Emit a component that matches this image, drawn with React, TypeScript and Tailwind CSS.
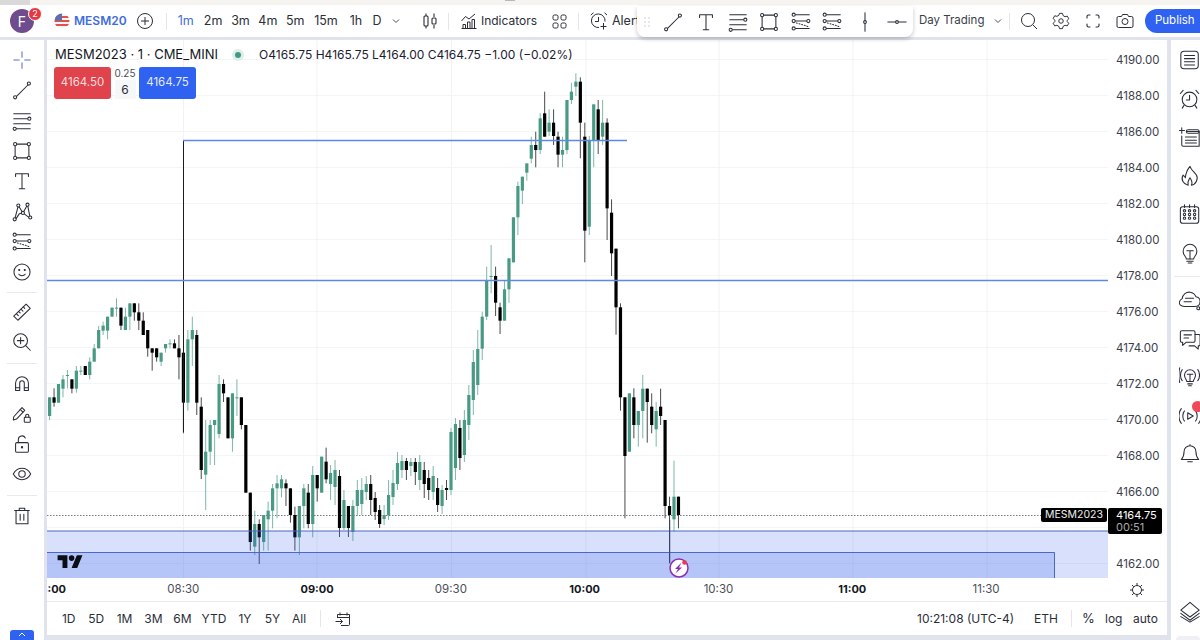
import React from "react";

type C = [number, string, number, number, number, number];

const z10: C[] = [
  [-30,"g",352,408,352,420],[-29,"b",352,368,325,380],[-28,"g",312,368,312,368],[-27,"g",298,326,285,352],[-26,"g",285,287,270,325],
  [-25,"b",298,326,298,340],[-24,"g",272,326,258,338],[-23,"g",272,274,258,285],[-22,"b",258,285,258,285],[-21,"g",245,285,232,298],
  [-20,"g",205,245,192,245],[-19,"g",150,205,138,205],[-18,"g",137,152,125,165],[-17,"g",110,152,110,178],[-16,"g",83,110,83,110],
  [-15,"g",83,85,55,110],[-14,"b",83,137,83,150],[-13,"g",110,150,83,150],[-12,"g",70,110,70,150],[-11,"b",70,97,70,122],
  [-10,"b",97,122,70,150],[-9,"b",122,165,97,165],[-8,"b",150,205,150,230],[-7,"b",205,218,205,272],[-6,"b",205,232,205,245],
  [-5,"g",218,245,218,258],[-4,"g",192,205,192,218],[-3,"g",190,192,178,205],[-2,"b",190,205,178,205],[-1,"b",205,232,165,298],
  [0,"b",218,368,218,460],[1,"g",178,368,150,392],[2,"g",150,178,110,258],[3,"b",165,368,150,405],[4,"b",380,570,352,597],
  [5,"g",515,584,420,690],[6,"g",435,515,420,555],[7,"g",420,435,420,555],[8,"g",312,462,285,475],[9,"b",312,340,298,366],
  [10,"b",352,475,352,475],[11,"g",340,475,340,515],[12,"g",352,354,298,408],[13,"b",352,435,352,448],[14,"b",435,638,435,638],
  [15,"b",638,786,638,812],[16,"g",732,800,692,825],[17,"b",732,772,718,852],[18,"g",705,786,705,812],[19,"g",692,718,665,812],
  [20,"g",625,692,612,745],[21,"g",610,625,585,715],[22,"g",598,625,585,652],[23,"b",610,625,598,678],[24,"b",625,705,625,728],
  [25,"b",705,772,680,812],[26,"g",678,772,678,825],[27,"g",625,678,612,745],[28,"b",638,732,612,745],[29,"g",585,732,558,772],
  [30,"b",585,625,585,665],[31,"g",530,638,530,638],[32,"b",545,598,503,610],
];
const real: C[] = [
  [33,"g",473,484,465,500],[34,"g",470,487,460,505],[35,"b",476,528,470,537],[36,"g",500,528,490,530],[37,"b",506,528,506,537],
  [38,"g",506,532,500,541],[39,"g",490,506,480,516],[40,"g",490,504,478,515],[41,"g",484,492,476,500],[42,"b",484,500,475,515],
  [43,"b",498,512,492,520],[44,"b",510,524,505,528],[45,"g",515,519,505,525],[46,"g",495,515,480,520],[47,"g",483,497,470,505],
  [48,"g",463,484,452,490],[49,"g",461,470,455,478],[50,"b",461,470,458,480],[51,"g",462,466,458,476],[52,"b",462,472,458,485],
  [53,"g",462,480,455,490],[54,"b",470,484,462,498],[55,"b",478,490,470,500],[56,"g",476,492,466,500],[57,"b",488,505,478,512],
  [58,"g",490,506,485,514],[59,"b",488,490,480,500],[60,"g",432,490,428,495],[61,"g",424,468,418,480],[62,"b",428,458,420,470],
  [63,"g",420,455,410,462],[64,"g",395,425,385,440],[65,"g",362,400,350,415],[66,"g",349,385,330,395],
];
const z11: C[] = [
  [67,"g",770,866,755,900],[68,"g",660,770,620,780],[69,"g",648,650,555,700],[70,"b",648,728,620,768],[71,"b",742,782,728,822],
  [72,"g",688,782,660,782],[73,"g",595,688,595,728],[74,"g",472,607,472,607],[75,"g",378,472,365,525],[76,"g",350,392,350,432],
  [77,"g",310,338,325,362],[78,"g",255,296,230,310],[79,"b",255,270,215,322],[80,"g",175,270,160,282],[81,"b",160,230,95,230],
  [82,"g",188,215,148,228],[83,"b",188,228,148,255],[84,"b",230,284,215,322],[85,"g",270,284,230,322],[86,"g",120,270,120,282],
  [87,"g",95,120,68,132],[88,"g",65,80,40,108],[89,"b",65,188,52,295],[90,"b",230,512,188,607],[91,"g",240,500,228,525],
  [92,"g",133,240,133,322],[93,"b",148,242,120,282],[94,"g",188,230,120,255],[95,"b",188,445,175,540],[96,"b",458,580,418,648],
  [97,"b",566,742,566,824],
];
const z12: C[] = [
  [98,"b",22,292,10,332],[99,"b",292,468,292,655],[100,"g",280,455,280,455],[101,"b",292,375,265,415],[102,"g",333,375,333,440],
  [103,"g",266,333,225,415],[104,"b",266,306,266,428],[105,"b",320,375,280,400],[106,"g",333,388,306,440],[107,"b",320,348,266,375],
  [108,"b",360,618,360,655],[109,"b",618,645,590,790],[110,"g",590,658,482,695],[111,"b",590,645,590,685],
];
const conv = (a: C[], o: number): C[] =>
  a.map(([i, c, t, b, h, l]) => [i, c, o + t / 3, o + b / 3, o + h / 3, o + l / 3] as C);
const candles: C[] = [...conv(z10, 280), ...real, ...conv(z11, 60), ...conv(z12, 300)];

const priceYs = Array.from({ length: 15 }, (_, k) => 59 + 36 * k);
const timeXs = [183.5, 317, 451.5, 586, 719, 853, 987];

const S = ({ s = 22, children, w = 1.15 }: { s?: number; w?: number; children: React.ReactNode }) => (
  <svg width={s} height={s} viewBox="0 0 24 24" fill="none" stroke="currentColor" strokeWidth={w} strokeLinecap="round" strokeLinejoin="round" className="shrink-0">
    {children}
  </svg>
);

const Dot = ({ x, y, r = 1.7 }: { x: number; y: number; r?: number }) => <circle cx={x} cy={y} r={r} fill="#fff" />;

const ICrosshair = () => (
  <S><path d="M12 3v6M12 15v6M3 12h6M15 12h6" /></S>
);
const ILine = ({ s = 22 }: { s?: number }) => (
  <S s={s}><path d="M5.5 19.5 19 6" /><Dot x={4.5} y={20} /><Dot x={19.5} y={5} /></S>
);
const IFib = ({ s = 22 }: { s?: number }) => (
  <S s={s}><path d="M3 4h18M3 9.5h15M3 15h18M5 20.5h16" /><Dot x={20} y={9.5} /><Dot x={4} y={20.5} /></S>
);
const IRect = ({ s = 22 }: { s?: number }) => (
  <S s={s}><rect x="4.5" y="4.5" width="15" height="15" /><Dot x={4.5} y={4.5} /><Dot x={19.5} y={4.5} /><Dot x={4.5} y={19.5} /><Dot x={19.5} y={19.5} /></S>
);
const IT = ({ s = 22 }: { s?: number }) => (
  <S s={s}><path d="M5 7V4h14v3M12 4v16.5M9 20.5h6" /></S>
);
const IPattern = () => (
  <S><path d="M4 20 8 5l5 8 5-9 3 15-8-6-4 1-4 6" /><Dot x={4} y={20} /><Dot x={8} y={5} /><Dot x={13} y={13} /><Dot x={18} y={4} /><Dot x={21} y={18} /></S>
);
const IForecast = ({ s = 22 }: { s?: number }) => (
  <S s={s}><path d="M5 4h16M5 11h13M5 19h16" /><path d="M7 13l13 4" strokeDasharray="1 2" /><Dot x={4} y={4} /><Dot x={4} y={11} /><Dot x={20} y={11} /><Dot x={4} y={19} /></S>
);
const ISmile = () => (
  <S><circle cx="12" cy="12" r="8.8" /><path d="M8.5 14.5c1.5 2 5.5 2 7 0" /><circle cx="9" cy="9.8" r=".6" fill="currentColor" /><circle cx="15" cy="9.8" r=".6" fill="currentColor" /></S>
);
const IRuler = () => (
  <S><path d="m3 16.5 13.5-13 4.5 4.5-13.5 13z" /><path d="m6 14 2 2M8.5 11.5l1.5 1.5M11 9l2 2M13.5 6.5 15 8" /></S>
);
const IZoom = () => (
  <S><circle cx="10.5" cy="10.5" r="7.5" /><path d="M10.5 7v7M7 10.5h7M16 16l5 5" /></S>
);
const IMagnet = () => (
  <S><path d="M5 19v-8a7 7 0 0 1 14 0v8h-4.500v-8a2.500 2.500 0 0 0-5 0v8z" /><path d="M5 16h4.500M14.500 16H19" /></S>
);
const IPencilLock = () => (
  <S><path d="m3 15 9-10 3 3-9 9.500-3.500 1z" /><path d="m10 7 3 3" /><rect x="14.500" y="15.500" width="6.500" height="5.500" rx=".8" /><path d="M16 15.500v-1.500a1.700 1.700 0 0 1 3.400 0v1.500" /></S>
);
const ILock = () => (
  <S><rect x="5" y="10.500" width="14" height="10.500" rx="1.500" /><path d="M8 10.500V7a4 4 0 0 1 7.600-1.600" /><circle cx="12" cy="15.500" r=".7" fill="currentColor" /></S>
);
const IEye = () => (
  <S><path d="M2.500 12C5 7.500 8.500 5.800 12 5.800s7 1.700 9.500 6.200c-2.500 4.500-6 6.200-9.500 6.200S5 16.500 2.500 12z" /><circle cx="12" cy="12" r="3.500" /></S>
);
const ITrash = () => (
  <S><path d="M4 6h16M5.500 6v14.500h13V6M9 6V3.500h6V6M10 10v6.500M14 10v6.500" /></S>
);
const IDoc = () => (
  <S><rect x="2" y="2.500" width="19" height="19" rx="3.500" /><path d="M6 7h11M6 10.500h11M6 14h11M6 17.500h11" /></S>
);
const IAlarm = () => (
  <S><circle cx="11.500" cy="12.500" r="8" /><path d="M11.500 8v5H8M4.500 2.500 1.500 6M18.500 2.500l3 3.500M5.500 19 3.500 22M17.500 19l2 3" /></S>
);
const IListPlus = () => (
  <S><path d="M0 5h6M3 2v6" /><path d="M3 11v9.500a1.500 1.500 0 0 0 1.500 1.500H22V6H9" /><rect x="8" y="4" width="14" height="4" rx="2" /><path d="M7 12h12M7 15.500h12M7 18.500h12" /></S>
);
const IFlame = () => (
  <S><path d="M12 1.500c1 4 5 6 7 9.500 2.300 4-.5 10.500-5.500 11 2-3-.5-6-1.500-8-1.200 2.500-3.500 4-2 8-5-.8-8.500-6-5.500-11 1.200 1 1.800 1.500 2.500 3 .3-5 2-9 5-12.500z" /></S>
);
const ICal = () => (
  <S><rect x="1.500" y="4" width="20" height="18" rx="2.500" /><path d="M6 2v3M11.500 2v3M17 2v3" />
    {[8.5, 12.5, 16.5].map((y) => [6, 11.5, 17].map((x) => <circle key={`${x}-${y}`} cx={x} cy={y} r="1.300" />))}
  </S>
);
const IBulb = () => (
  <S><path d="M8 18.500c0-2.500-3.500-4-3.500-8.500a7.500 7.500 0 0 1 15 0c0 4.500-3.500 6-3.500 8.500z" /><path d="M8.500 9.500h7M12 9.500v9M8.500 21h7M10 23h4" /></S>
);
const ICloud = () => (
  <S><path d="M6 19c-4 0-6-2-5.500-5 .4-2 2-3 3-3.500C4 6 8 3 12 3.500c3.500.4 5.500 2.500 6.500 5 2.500.4 4.500 2 4.500 5 0 3.500-2.500 5.500-6 5.500z" /><path d="M7 10h9M5.500 14h8" /><circle cx="21" cy="21" r="1.600" /></S>
);
const IChat = () => (
  <S><path d="M3 3h13a1.500 1.500 0 0 1 1.500 1.500V14a1.500 1.500 0 0 1-1.500 1.500H8L4 19v-3.500H3A1.500 1.500 0 0 1 1.500 14V4.500A1.500 1.500 0 0 1 3 3z" /><path d="M5.500 7.500h8M5.500 11h5M17.500 7h4a1.500 1.500 0 0 1 1.500 1.500V18a1.500 1.500 0 0 1-1.500 1.500H21V23l-4-3.500h-6" /></S>
);
const IBulbWave = () => (
  <S><path d="M8.500 17c0-2-2.500-3.500-2.500-7a6 6 0 0 1 12 0c0 3.500-2.500 5-2.500 7z" /><path d="M9 9h6M12 9v8M9.500 19.500h5M10.500 21.500h3" /><path d="M3.500 4C1 7 1 13 3.500 16M.8 2C-.5 6-.5 14 .8 18M20.500 4c2.500 3 2.500 9 0 12" /></S>
);
const IRadio = () => (
  <S><path d="M9.500 8.500v7l6-3.500z" /><path d="M6 6.500c-2.500 3-2.500 8 0 11M2.500 4C-1 8.500-1 15.500 2.500 20M18 6.500c2.500 3 2.500 8 0 11M21.500 4c3.500 4.500 3.500 11.500 0 16" /></S>
);
const IBell = () => (
  <S><path d="M12 3a6.500 6.500 0 0 0-6.500 6.500c0 5-2 7.500-3 8.500h19c-1-1-3-3.500-3-8.500A6.500 6.500 0 0 0 12 3zM12 3V1.800M9.500 20.500h5" /></S>
);
const ILayers = () => (
  <S><path d="m12 1.500 10 8.500-10 7.500L2 10z" /><path d="m2 13.500 10 7.500 10-7.500M2 17l10 6 10-6" /></S>
);

const LeftSlot = ({ children, h = "h-[30px]" }: { children: React.ReactNode; h?: string }) => (
  <div className={`${h} flex items-center justify-center`}>{children}</div>
);
const LeftDiv = ({ h }: { h: string }) => (
  <div className={`${h} flex items-center justify-center`}>
    <div className="w-[30px] h-px bg-[#e8e9ee]" />
  </div>
);
const RightSlot = ({ children }: { children: React.ReactNode }) => (
  <div className="h-[38.5px] flex items-center pl-[8px]">{children}</div>
);

const VDiv = ({ ml }: { ml: string }) => <div className={`${ml} w-px h-[17px] bg-[#e4e6eb] shrink-0`} />;

const Chev = () => (
  <svg width="10" height="10" viewBox="0 0 10 10" fill="none" stroke="#4b4f5c" strokeWidth="1" className="shrink-0"><path d="m2 3.500 3 3 3-3" /></svg>
);

const Tf = ({ t, w, on }: { t: string; w: string; on?: boolean }) => (
  <div className={`${w} text-center ${on ? "text-[#3f6de0]" : "text-[#2a2e39]"}`}>{t}</div>
);

const Range = ({ t, w }: { t: string; w: string }) => <div className={`${w} text-center`}>{t}</div>;

export default function App() {
  return (
    <div className="w-[1200px] h-[640px] overflow-hidden bg-[#e0e3eb] flex flex-col relative text-[#2a2e39]" style={{ fontFamily: "Inter, 'Noto Sans', sans-serif" }}>
      <div className="h-[5px] bg-[#f6f4f1] flex shrink-0">
        <div className="w-[30px] bg-[#d9d9d9]" />
        <div className="ml-[475px] w-[10px] h-[1px] bg-[#b8b8b8]" />
      </div>

      <div className="h-[32px] bg-white flex items-center shrink-0 text-[12.5px]">
        <div className="w-[54px] shrink-0 relative h-full flex items-center">
          <div className="ml-[10px] w-[24px] h-[24px] rounded-full bg-[#6e4c8e] text-white text-[14px] flex items-center justify-center">F</div>
          <div className="absolute left-[28px] top-[2px] w-[14px] h-[14px] rounded-full bg-[#e8383f] border border-white text-white text-[9px] flex items-center justify-center">2</div>
        </div>
        <div className="w-[20px] shrink-0">
          <svg width="16" height="16" viewBox="0 0 16 16">
            <defs><clipPath id="fc"><circle cx="8" cy="8" r="7.500" /></clipPath></defs>
            <g clipPath="url(#fc)">
              <rect width="16" height="16" fill="#f5f5f5" />
              <path d="M0 3h16v2H0zM0 7h16v2H0zM0 11h16v2H0z" fill="#e0524a" />
              <rect width="8" height="7.500" fill="#5d6fae" />
            </g>
          </svg>
        </div>
        <div className="w-[62px] shrink-0 text-[#3f6de0] font-semibold text-[12px]">MESM20</div>
        <div className="w-[19px] shrink-0">
          <svg width="18" height="18" viewBox="0 0 18 18" fill="none" stroke="#2a2e39" strokeWidth="1"><circle cx="9" cy="9" r="7.500" /><path d="M9 5v8M5 9h8" /></svg>
        </div>
        <VDiv ml="ml-[11px]" />
        <div className="flex ml-[5px] items-center shrink-0">
          <Tf t="1m" w="w-[27.400px]" on />
          <Tf t="2m" w="w-[27.400px]" />
          <Tf t="3m" w="w-[27.400px]" />
          <Tf t="4m" w="w-[27.400px]" />
          <Tf t="5m" w="w-[27.400px]" />
          <Tf t="15m" w="w-[34px]" />
          <Tf t="1h" w="w-[26px]" />
          <Tf t="D" w="w-[16px]" />
          <div className="w-[22px] flex justify-center"><Chev /></div>
        </div>
        <div className="ml-[12px] w-[22px] shrink-0 flex justify-center">
          <svg width="18" height="18" viewBox="0 0 18 18" fill="none" stroke="#2a2e39" strokeWidth="1.100"><rect x="3" y="4" width="4" height="10" rx="1" /><path d="M5 1.500V4M5 14v2.500M13 1.500V5M13 13v3.500" /><rect x="11" y="6" width="4" height="6" rx="1" /></svg>
        </div>
        <VDiv ml="ml-[7px]" />
        <div className="ml-[12px] shrink-0 text-[#2a2e39]">
          <svg width="16" height="16" viewBox="0 0 16 16" fill="none" stroke="currentColor" strokeWidth="1"><path d="M.5 15.500h15M2 15.500v-4h2.500v4M6.500 15.500V9H9v6.500M11 15.500V6.500h2.500v9" /><path d="m.5 8 4-4.500 3.500 2.500 6-5" /></svg>
        </div>
        <div className="ml-[4px] w-[54px] shrink-0 whitespace-nowrap text-[12px]">Indicators</div>
        <div className="ml-[17px] shrink-0">
          <svg width="15" height="15" viewBox="0 0 15 15" fill="none" stroke="#2a2e39" strokeWidth="1"><rect x="1" y="1" width="5" height="5" rx="1.500" /><rect x="9" y="1" width="5" height="5" rx="1.500" /><rect x="1" y="9" width="5" height="5" rx="1.500" /><rect x="9" y="9" width="5" height="5" rx="1.500" /></svg>
        </div>
        <VDiv ml="ml-[11px]" />
        <div className="ml-[11px] shrink-0">
          <svg width="18" height="18" viewBox="0 0 18 18" fill="none" stroke="#2a2e39" strokeWidth="1"><path d="M15 9.500A6.800 6.800 0 1 0 9 15.500" /><path d="M8.500 5v4.500H5M.8 3 3.500.8M17 3 14.500.8M13.500 11v6.500M10.500 14.500h6" /></svg>
        </div>
        <div className="ml-[4px] w-[26px] shrink-0 whitespace-nowrap">Alert</div>
        <div className="ml-[281px] w-[65px] shrink-0 whitespace-nowrap text-[11.500px] text-[#3a3e49]">Day Trading</div>
        <div className="ml-[9px] shrink-0"><Chev /></div>
        <VDiv ml="ml-[6px]" />
        <div className="ml-[10px] shrink-0">
          <svg width="18" height="18" viewBox="0 0 18 18" fill="none" stroke="#2a2e39" strokeWidth="1"><circle cx="8" cy="8" r="6.500" /><path d="m13 13 4 4" /></svg>
        </div>
        <div className="ml-[14px] shrink-0">
          <svg width="18" height="18" viewBox="0 0 24 24" fill="none" stroke="#2a2e39" strokeWidth="1.300" strokeLinejoin="round"><circle cx="12" cy="12" r="3" /><path d="M10 1.800h4l.8 3 2.600 1.500 3-.8 2 3.500-2.200 2.200v1.600l2.200 2.200-2 3.500-3-.8-2.600 1.500-.8 3h-4l-.8-3-2.600-1.500-3 .8-2-3.500 2.200-2.200v-1.600L1.600 8.500l2-3.500 3 .8 2.600-1.500z" /></svg>
        </div>
        <div className="ml-[14px] shrink-0">
          <svg width="18" height="18" viewBox="0 0 18 18" fill="none" stroke="#2a2e39" strokeWidth="1.100" strokeLinecap="round"><path d="M3 6V4.500A1.500 1.500 0 0 1 4.500 3H6M12 3h1.500A1.500 1.500 0 0 1 15 4.500V6M15 12v1.500a1.500 1.500 0 0 1-1.500 1.500H12M6 15H4.500A1.500 1.500 0 0 1 3 13.500V12" /></svg>
        </div>
        <div className="ml-[14px] shrink-0">
          <svg width="18" height="18" viewBox="0 0 18 18" fill="none" stroke="#2a2e39" strokeWidth="1"><path d="M2.500 4.500H5.500L6.500 2.500h5l1 2h3a1.500 1.500 0 0 1 1.500 1.500v8a1.500 1.500 0 0 1-1.500 1.500h-13A1.500 1.500 0 0 1 1 14V6a1.500 1.500 0 0 1 1.500-1.500z" /><circle cx="9" cy="9.500" r="3" /></svg>
        </div>
        <div className="ml-[11px] w-[60px] h-[24px] shrink-0 rounded-l-full bg-[#2f62f0] text-white pl-[10px] flex items-center text-[11.500px]">Publish</div>
      </div>

      <div className="absolute left-[637px] top-[6px] w-[276px] h-[31px] bg-white rounded-b-[8px] shadow-[0_2px_4px_rgba(0,0,0,0.22)] flex items-center text-[#2a2e39] z-10">
        <div className="ml-[7px] w-[6px] shrink-0">
          <svg width="6" height="10" viewBox="0 0 6 10" fill="#c9cbd3"><circle cx="1" cy="1" r=".8" /><circle cx="5" cy="1" r=".8" /><circle cx="1" cy="5" r=".8" /><circle cx="5" cy="5" r=".8" /><circle cx="1" cy="9" r=".8" /><circle cx="5" cy="9" r=".8" /></svg>
        </div>
        <div className="ml-[12px] shrink-0"><ILine s={22} /></div>
        <div className="ml-[11px] shrink-0"><IT s={22} /></div>
        <div className="ml-[10px] shrink-0"><IFib s={22} /></div>
        <div className="ml-[9px] shrink-0"><IRect s={22} /></div>
        <div className="ml-[10px] shrink-0"><IForecast s={22} /></div>
        <div className="ml-[9px] shrink-0"><IForecast s={22} /></div>
        <div className="ml-[11px] shrink-0">
          <S s={22}><path d="M12 2v20" /><Dot x={12} y={12} r={1.5} /></S>
        </div>
        <div className="ml-[10px] shrink-0">
          <S s={22}><path d="M2 12h20" /><Dot x={12} y={12} r={1.5} /></S>
        </div>
      </div>

      <div className="flex flex-1 mt-[3px] min-h-0">
        <div className="w-[44px] bg-white flex flex-col pt-[5px] text-[#2a2e39] shrink-0">
          <LeftSlot h="h-[30.300px]"><span className="text-[#5a6fd0]"><ICrosshair /></span></LeftSlot>
          <LeftSlot h="h-[30.300px]"><ILine /></LeftSlot>
          <LeftSlot h="h-[30.300px]"><IFib /></LeftSlot>
          <LeftSlot h="h-[30.300px]"><IRect /></LeftSlot>
          <LeftSlot h="h-[30.300px]"><IT /></LeftSlot>
          <LeftSlot h="h-[30.300px]"><IPattern /></LeftSlot>
          <LeftSlot h="h-[30.300px]"><IForecast /></LeftSlot>
          <LeftSlot h="h-[30.300px]"><ISmile /></LeftSlot>
          <LeftDiv h="h-[10px]" />
          <LeftSlot><IRuler /></LeftSlot>
          <LeftSlot><IZoom /></LeftSlot>
          <LeftDiv h="h-[12px]" />
          <LeftSlot><IMagnet /></LeftSlot>
          <LeftSlot><IPencilLock /></LeftSlot>
          <LeftSlot><ILock /></LeftSlot>
          <LeftSlot><IEye /></LeftSlot>
          <LeftDiv h="h-[12px]" />
          <LeftSlot><ITrash /></LeftSlot>
          <div className="mt-auto mx-[10px] h-[10px] bg-[#2f62f0] rounded-t-[3px] flex justify-center">
            <svg width="12" height="10" viewBox="0 0 12 10" fill="none" stroke="#fff" strokeWidth="1"><path d="m3 6 3-3 3 3" /></svg>
          </div>
        </div>

        <div className="w-[1120px] ml-[3px] flex flex-col shrink-0">
          <div className="h-[538px] bg-white flex shrink-0">
            <div className="w-[1061px] h-full relative overflow-hidden">
              <svg width="1061" height="538" viewBox="47 40 1061 538" className="absolute inset-0">
                {priceYs.map((y) => <line key={y} x1="47" x2="1108" y1={y + 0.5} y2={y + 0.5} stroke="#f4f5f7" />)}
                {timeXs.map((x) => <line key={x} x1={x} x2={x} y1="40" y2="578" stroke="#f1f2f5" />)}
                <line x1="47" x2="1041" y1="515.500" y2="515.500" stroke="#777" strokeDasharray="1.500 1.500" />
                {candles.map(([i, c, t, b, h, l]) => {
                  const x = 183.4 + i * 4.46;
                  const fill = c === "g" ? "#489a85" : "#000";
                  const wick = c === "g" ? "#7db8a8" : "#4a4a4a";
                  return (
                    <g key={i}>
                      <line x1={x} x2={x} y1={h} y2={l} stroke={wick} />
                      <rect x={x - 1.6} y={t} width="3.200" height={Math.max(b - t, 1)} fill={fill} />
                    </g>
                  );
                })}
                <line x1="183.500" x2="183.500" y1="140" y2="432" stroke="#1c1c1c" />
                <line x1="183" x2="627" y1="140.500" y2="140.500" stroke="#5f88e4" strokeWidth="1.500" />
                <line x1="47" x2="1108" y1="280.500" y2="280.500" stroke="#5f88e4" strokeWidth="1.500" />
                <rect x="47" y="531" width="1061" height="47" fill="rgba(48,92,235,0.19)" />
                <line x1="47" x2="1108" y1="531" y2="531" stroke="#4a68c8" />
                <rect x="47" y="552" width="1008" height="26" fill="rgba(48,92,235,0.2)" />
                <path d="M47 552.500H1054.500V578" fill="none" stroke="#4a68c8" />
                <line x1="669.700" x2="669.700" y1="520" y2="563" stroke="#34406a" />
                <g transform="translate(10 514) scale(0.7)" fill="#0c0e15">
                  <path d="M14 22H7V11H0V4h14v18zM28 22h-8l7.500-18h8L28 22z" transform="translate(68 55)" />
                  <circle cx="88" cy="63" r="4" />
                </g>
                <circle cx="679" cy="568" r="9" fill="#fff" stroke="#8e2db5" strokeWidth="1.500" />
                <path d="M681.500 562.500 675 569h3l-2.500 4.500 6.500-6h-3z" fill="#8e2db5" />
                <circle cx="684.500" cy="562.500" r="2.300" fill="#ec3b46" />
              </svg>

              <div className="absolute left-[8px] top-[5px] flex items-center whitespace-nowrap">
                <span className="text-[13px] text-[#131722]">MESM2023 · 1 · CME_MINI</span>
                <span className="ml-[14px] w-[12px] h-[12px] rounded-full bg-[#e0eeea] flex items-center justify-center">
                  <span className="w-[6px] h-[6px] rounded-full bg-[#3f9a85]" />
                </span>
                <span className="ml-[15px] text-[12px] text-[#1c2030]">O4165.75 H4165.75 L4164.00 C4164.75 −1.00 (−0.02%)</span>
              </div>
              <div className="absolute left-[7px] top-[27px] flex items-start">
                <div className="w-[57px] h-[32px] rounded-[3px] bg-[#e0434c] text-[#f8dede] text-[11.500px] flex items-center justify-center">4164.50</div>
                <div className="w-[28px] flex flex-col items-center">
                  <div className="h-[13px] text-[10px] text-[#4a4e59] leading-[13px]">0.25</div>
                  <div className="w-[21px] h-[19px] bg-[#f6f7f9] text-[12px] text-[#2a2e39] flex items-center justify-center">6</div>
                </div>
                <div className="w-[57px] h-[32px] rounded-[3px] bg-[#2f62f0] text-[#e4ebff] text-[11.500px] flex items-center justify-center">4164.75</div>
              </div>
              <div className="absolute left-[994px] top-[468px] w-[66px] h-[14px] bg-black rounded-[2px] text-[10.500px] text-[#eee] flex items-center justify-center">MESM2023</div>
            </div>
            <div className="w-[59px] relative text-[11.500px] text-[#3a3e49]">
              <div className="flex flex-col pt-[3px] pl-[8px]">
                {priceYs.map((y) => {
                  const p = 4190 - (y - 59) / 18;
                  return (
                    <div key={y} className="h-[36px] flex items-center">{p === 4164 ? "" : p.toFixed(2)}</div>
                  );
                })}
              </div>
              <div className="absolute left-0 top-[468px] w-[54px] h-[26px] bg-black rounded-[2px] text-[11px] leading-[12px] pl-[8px] pt-[1px]">
                <div className="text-white">4164.75</div>
                <div className="text-[#aaa]">00:51</div>
              </div>
            </div>
          </div>

          <div className="h-[24px] bg-white border-b border-[#e8e9ee] flex shrink-0 text-[11.500px] text-[#4a4e59]">
            <div className="w-[1061px] overflow-hidden flex items-center">
              <div className="flex -ml-[64.400px] shrink-0">
                {[["08:00", 1], ["08:30", 0], ["09:00", 1], ["09:30", 0], ["10:00", 1], ["10:30", 0], ["11:00", 1], ["11:30", 0]].map(([t, b]) => (
                  <div key={t as string} className={`w-[133.800px] shrink-0 text-center ${b ? "font-bold text-[11px] text-[#131722]" : ""}`}>{t}</div>
                ))}
              </div>
            </div>
            <div className="w-[59px] flex items-center justify-start pl-[21px]">
              <svg width="16" height="16" viewBox="0 0 16 16" fill="none" stroke="#2a2e39" strokeWidth="1"><circle cx="8" cy="8" r="4.500" /><path d="M8 1v2.500M8 12.500V15M1 8h2.500M12.500 8H15M3 3l1.800 1.800M11.200 11.200 13 13M13 3l-1.800 1.800M4.800 11.200 3 13" /></svg>
            </div>
          </div>

          <div className="h-[33px] bg-white flex items-center text-[12px] text-[#2a2e39] shrink-0">
            <div className="flex ml-[8px] items-center">
              <Range t="1D" w="w-[27.500px]" />
              <Range t="5D" w="w-[27.500px]" />
              <Range t="1M" w="w-[29px]" />
              <Range t="3M" w="w-[29px]" />
              <Range t="6M" w="w-[29px]" />
              <Range t="YTD" w="w-[34px]" />
              <Range t="1Y" w="w-[28px]" />
              <Range t="5Y" w="w-[27px]" />
              <Range t="All" w="w-[26px]" />
            </div>
            <VDiv ml="ml-[8px]" />
            <div className="ml-[14px] shrink-0">
              <svg width="16" height="16" viewBox="0 0 16 16" fill="none" stroke="#2a2e39" strokeWidth="1"><path d="M2.500 7V3.500h12v10a1 1 0 0 1-1 1H6M2.500 6.500h12M5 1.500v3M12 1.500v3M.5 10.500h7M5 8l2.500 2.500L5 13" /></svg>
            </div>
            <div className="ml-[566px] w-[97px] whitespace-nowrap shrink-0">10:21:08 (UTC-4)</div>
            <div className="ml-[20px] w-[23px] shrink-0">ETH</div>
            <VDiv ml="ml-[14px]" />
            <div className="ml-[10px] w-[12px] shrink-0 text-[13px]">%</div>
            <div className="ml-[11px] w-[16px] shrink-0">log</div>
            <div className="ml-[12px] w-[24px] shrink-0">auto</div>
          </div>
        </div>

        <div className="w-[29px] ml-[4px] bg-white flex flex-col text-[#2a2e39] overflow-hidden shrink-0">
          <div className="h-px" />
          <RightSlot><IDoc /></RightSlot>
          <RightSlot><IAlarm /></RightSlot>
          <RightSlot><IListPlus /></RightSlot>
          <RightSlot><IFlame /></RightSlot>
          <RightSlot><ICal /></RightSlot>
          <RightSlot><IBulb /></RightSlot>
          <div className="h-[9px] flex items-center pl-[3px]"><div className="w-[26px] h-px bg-[#e8e9ee]" /></div>
          <RightSlot><ICloud /></RightSlot>
          <RightSlot><IChat /></RightSlot>
          <RightSlot><IBulbWave /></RightSlot>
          <div className="relative">
            <RightSlot><IRadio /></RightSlot>
            <div className="absolute left-[21px] top-[4px] w-[11px] h-[11px] rounded-full bg-[#ef4a5a]" />
          </div>
          <RightSlot><IBell /></RightSlot>
          <div className="mt-auto mb-[5px]"><RightSlot><ILayers /></RightSlot></div>
          <div className="ml-[5px] h-[4px] bg-[#eef0f6] rounded-t-[4px]" />
        </div>
      </div>
    </div>
  );
}
